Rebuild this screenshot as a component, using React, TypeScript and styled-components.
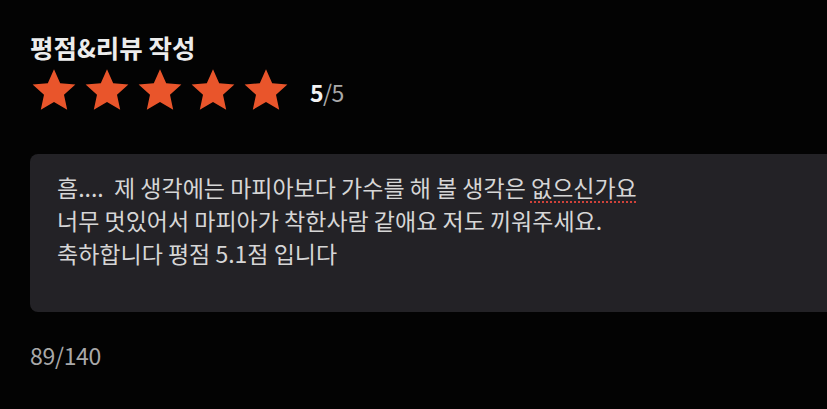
import React from 'react';
import styled, { createGlobalStyle } from 'styled-components';

const colors = {
  page: '#030303',
  panel: '#232226',
  star: '#e9552b',
  title: '#ececec',
  body: '#d6d6d6',
  muted: '#a9a9a9',
  squiggle: '#d0423a',
};

const font = `"Noto Sans CJK KR", "Noto Sans", sans-serif`;

const GlobalStyle = createGlobalStyle`
  html, body {
    margin: 0;
    padding: 0;
    background: ${colors.page};
  }
  #root {
    width: 827px;
    height: 409px;
    overflow: hidden;
  }
`;

const Page = styled.div`
  display: flex;
  flex-direction: column;
  height: 409px;
  padding: 31px 0 0 30px;
  box-sizing: border-box;
  font-family: ${font};
  background: ${colors.page};
`;

const Title = styled.h2`
  margin: 0;
  font-size: 25.5px;
  line-height: 32px;
  font-weight: 700;
  color: ${colors.title};
`;

const RatingRow = styled.div`
  display: flex;
  align-items: center;
  margin-top: 3px;
`;

const Stars = styled.div`
  display: flex;
  gap: 5px;
`;

const StarIcon = styled.svg<{ $on: boolean }>`
  width: 48px;
  height: 48px;
  display: block;
  polygon {
    fill: ${(p) => (p.$on ? colors.star : '#444')};
  }
`;

const Score = styled.div`
  margin-left: 20px;
  font-size: 23px;
  line-height: 30px;
  padding-top: 3px;
  color: ${colors.muted};
  letter-spacing: -0.5px;
  b {
    font-weight: 700;
    color: #f2f2f2;
  }
`;

const Panel = styled.div`
  width: 830px;
  height: 158px;
  margin-top: 40px;
  padding: 17px 0 0 27px;
  box-sizing: border-box;
  background: ${colors.panel};
  border-radius: 8px 0 0 8px;
`;

const ReviewText = styled.p`
  margin: 0;
  font-size: 23px;
  line-height: 33px;
  color: ${colors.body};
  white-space: pre;
`;

const Misspelled = styled.span`
  text-decoration-line: underline;
  text-decoration-style: dotted;
  text-decoration-color: ${colors.squiggle};
  text-decoration-thickness: 2px;
  text-underline-offset: 4px;
`;

const Counter = styled.div`
  margin-top: 31px;
  font-size: 23px;
  line-height: 24px;
  letter-spacing: -0.3px;
  color: ${colors.muted};
`;

const Star = ({ on }: { on: boolean }) => (
  <StarIcon $on={on} viewBox="0 0 24 24">
    <polygon points="12,1.6 15.1,8.6 22.7,9.3 17,14.4 18.6,21.9 12,18 5.4,21.9 7,14.4 1.3,9.3 8.9,8.6" />
  </StarIcon>
);

export default function App() {
  const rating = 5;
  return (
    <>
      <GlobalStyle />
      <Page>
        <Title>평점&amp;리뷰 작성</Title>
        <RatingRow>
          <Stars>
            {[1, 2, 3, 4, 5].map((n) => (
              <Star key={n} on={n <= rating} />
            ))}
          </Stars>
          <Score>
            <b>{rating}</b>/5
          </Score>
        </RatingRow>
        <Panel>
          <ReviewText>
            {'흠....  제 생각에는 마피아보다 가수를 해 볼 생각은 '}
            <Misspelled>없으신가요</Misspelled>
            {'\n너무 멋있어서 마피아가 착한사람 같애요 저도 끼워주세요.\n축하합니다 평점 5.1점 입니다'}
          </ReviewText>
        </Panel>
        <Counter>89/140</Counter>
      </Page>
    </>
  );
}
